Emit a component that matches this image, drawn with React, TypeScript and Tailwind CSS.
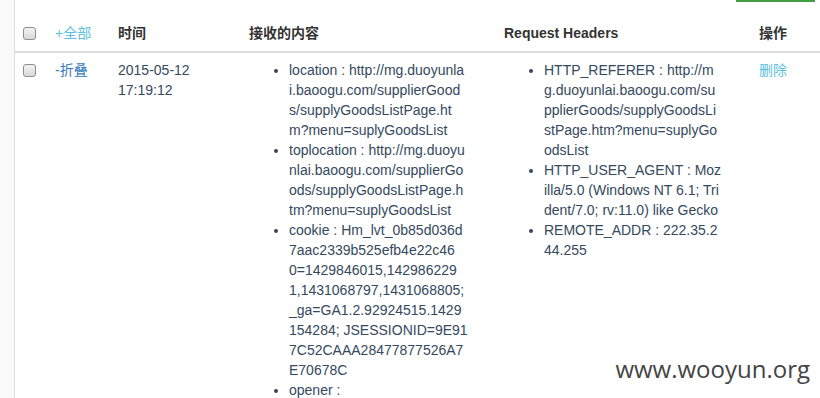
const CONTENT: string[][] = [
  ["location : http://mg.duoyunla", "i.baoogu.com/supplierGood", "s/supplyGoodsListPage.ht", "m?menu=suplyGoodsList"],
  ["toplocation : http://mg.duoyu", "nlai.baoogu.com/supplierGo", "ods/supplyGoodsListPage.h", "tm?menu=suplyGoodsList"],
  [
    "cookie : Hm_lvt_0b85d036d",
    "7aac2339b525efb4e22c46",
    "0=1429846015,142986229",
    "1,1431068797,1431068805;",
    "_ga=GA1.2.92924515.1429",
    "154284; JSESSIONID=9E91",
    "7C52CAAA28477877526A7",
    "E70678C",
  ],
  ["opener :"],
];

const HEADERS: string[][] = [
  ["HTTP_REFERER : http://m", "g.duoyunlai.baoogu.com/su", "pplierGoods/supplyGoodsLi", "stPage.htm?menu=suplyGo", "odsList"],
  ["HTTP_USER_AGENT : Moz", "illa/5.0 (Windows NT 6.1; Tri", "dent/7.0; rv:11.0) like Gecko"],
  ["REMOTE_ADDR : 222.35.2", "44.255"],
];

function Checkbox() {
  return (
    <span className="inline-block w-[13px] h-[13px] rounded-[3px] border border-[#8e8e8e] bg-gradient-to-b from-[#f2f2f2] to-[#d9d9d9] align-middle" />
  );
}

function Lines({ items }: { items: string[][] }) {
  return (
    <ul className="list-disc pl-[40px] mb-[10px] whitespace-nowrap">
      {items.map((lines, i) => (
        <li key={i}>
          {lines.map((l, j) => (
            <span key={j} className="block">
              {l}
            </span>
          ))}
        </li>
      ))}
    </ul>
  );
}

export default function App() {
  return (
    <div
      className="relative flex h-[398px] w-[820px] overflow-hidden bg-white text-[14px] leading-[20px] text-[#34495e]"
      style={{ fontFamily: '"Liberation Sans", Arial, "Noto Sans CJK SC", sans-serif' }}
    >
      <div className="w-[15px] shrink-0 bg-[#fafafa] border-r border-[#dcdcdc]" />
      <div className="flex-1">
        <div className="flex justify-end pr-[5px]">
          <div className="h-[2px] w-[79px] bg-[#449d44]" />
        </div>
        <table className="mt-[11px] w-[805px] table-fixed border-collapse">
          <colgroup>
            <col className="w-[32px]" />
            <col className="w-[63px]" />
            <col className="w-[131px]" />
            <col className="w-[255px]" />
            <col className="w-[255px]" />
            <col />
          </colgroup>
          <thead>
            <tr className="border-b-2 border-[#dddddd] text-left align-bottom text-[#333]">
              <th className="p-[8px] pt-[10px]">
                <span className="flex h-[20px] items-center">
                  <Checkbox />
                </span>
              </th>
              <th className="p-[8px] pt-[10px] font-normal">
                <a className="text-[#5bc0de]">+全部</a>
              </th>
              <th className="p-[8px] pt-[10px] font-bold">时间</th>
              <th className="p-[8px] pt-[10px] font-bold">接收的内容</th>
              <th className="p-[8px] pt-[10px] font-bold">Request Headers</th>
              <th className="p-[8px] pt-[10px] font-bold">操作</th>
            </tr>
          </thead>
          <tbody>
            <tr className="align-top">
              <td className="p-[8px] pt-[7px]">
                <span className="flex h-[20px] items-center">
                  <Checkbox />
                </span>
              </td>
              <td className="p-[8px] pt-[7px]">
                <a className="text-[#337ab7]">-折叠</a>
              </td>
              <td className="p-[8px] pt-[7px]">
                2015-05-12
                <br />
                17:19:12
              </td>
              <td className="p-[8px] pt-[7px]">
                <Lines items={CONTENT} />
              </td>
              <td className="p-[8px] pt-[7px]">
                <Lines items={HEADERS} />
              </td>
              <td className="p-[8px] pt-[7px]">
                <a className="text-[#5bc0de]">删除</a>
              </td>
            </tr>
          </tbody>
        </table>
      </div>
      <div
        className="absolute right-[10px] bottom-[14px] text-[24px] leading-[30px] text-[#444]"
        style={{ fontFamily: '"Open Sans", sans-serif' }}
      >
        www.wooyun.org
      </div>
    </div>
  );
}
